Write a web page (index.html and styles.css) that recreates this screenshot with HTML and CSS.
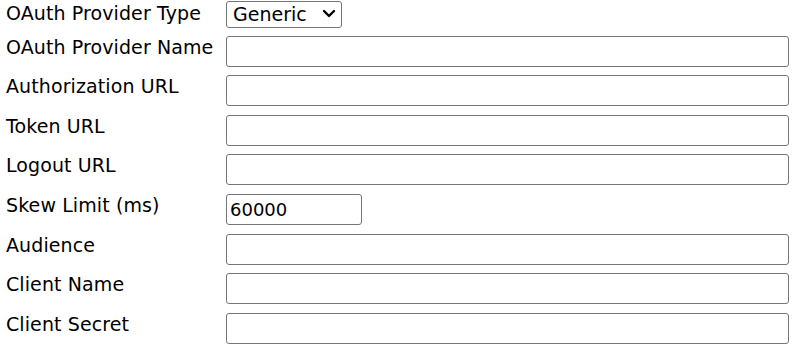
FILE: index.html
```html
<!DOCTYPE html>
<html lang="en">
<head>
    <meta charset="UTF-8">
    <meta name="viewport" content="width=device-width, initial-scale=1.0">
    <title>OAuth Provider</title>
    <link rel="stylesheet" href="styles.css">
</head>
<body>
    <form class="oauth-form">
        <label class="field-label first" for="providerType">OAuth Provider Type</label>
        <div class="field first">
            <div class="select-wrap">
                <select id="providerType" class="select">
                    <option>Generic</option>
                </select>
                <svg class="chevron" width="14" height="9" viewBox="0 0 14 9">
                    <path d="M2 2 L7 7 L12 2" fill="none" stroke="#000" stroke-width="2.4" stroke-linecap="round" stroke-linejoin="round"/>
                </svg>
            </div>
        </div>

        <label class="field-label" for="providerName">OAuth Provider Name</label>
        <div class="field"><input type="text" id="providerName" class="text-input"></div>

        <label class="field-label" for="authUrl">Authorization URL</label>
        <div class="field"><input type="text" id="authUrl" class="text-input"></div>

        <label class="field-label" for="tokenUrl">Token URL</label>
        <div class="field"><input type="text" id="tokenUrl" class="text-input"></div>

        <label class="field-label" for="logoutUrl">Logout URL</label>
        <div class="field"><input type="text" id="logoutUrl" class="text-input"></div>

        <label class="field-label" for="skewLimit">Skew Limit (ms)</label>
        <div class="field"><input type="text" id="skewLimit" class="text-input short" value="60000"></div>

        <label class="field-label" for="audience">Audience</label>
        <div class="field"><input type="text" id="audience" class="text-input"></div>

        <label class="field-label" for="clientName">Client Name</label>
        <div class="field"><input type="text" id="clientName" class="text-input"></div>

        <label class="field-label" for="clientSecret">Client Secret</label>
        <div class="field"><input type="password" id="clientSecret" class="text-input"></div>
    </form>
</body>
</html>
```

FILE: styles.css
```css
body {
    margin: 0;
    font-family: "DejaVu Sans", Verdana, sans-serif;
    font-size: 19px;
    color: #000;
    background: #fff;
}
.oauth-form {
    display: grid;
    grid-template-columns: 221px 563px;
    row-gap: 8.6px;
    padding: 1px 0 0 5px;
    align-items: start;
}
.field-label {
    line-height: 22px;
    padding-left: 1px;
    letter-spacing: 0.1px;
}
.field-label.first {
    padding-top: 1px;
}
.field {
    display: flex;
}
.field.first {
    margin-bottom: -1px;
}
.select-wrap {
    position: relative;
}
.select {
    appearance: none;
    -webkit-appearance: none;
    display: block;
    box-sizing: border-box;
    width: 116px;
    height: 27px;
    font-family: "DejaVu Sans", Verdana, sans-serif;
    font-size: 19px;
    line-height: 25px;
    color: #000;
    background: #fff;
    border: 1px solid #767676;
    border-radius: 3px;
    padding: 0 0 0 6px;
    margin: 0;
}
.chevron {
    position: absolute;
    left: 96px;
    top: 8px;
    pointer-events: none;
}
.text-input {
    box-sizing: border-box;
    width: 563px;
    height: 31px;
    font-family: "DejaVu Sans", Verdana, sans-serif;
    font-size: 18px;
    color: #000;
    border: 1px solid #767676;
    border-radius: 3px;
    padding: 1px 3px;
    margin: 0;
}
.text-input.short {
    width: 136px;
}
```
